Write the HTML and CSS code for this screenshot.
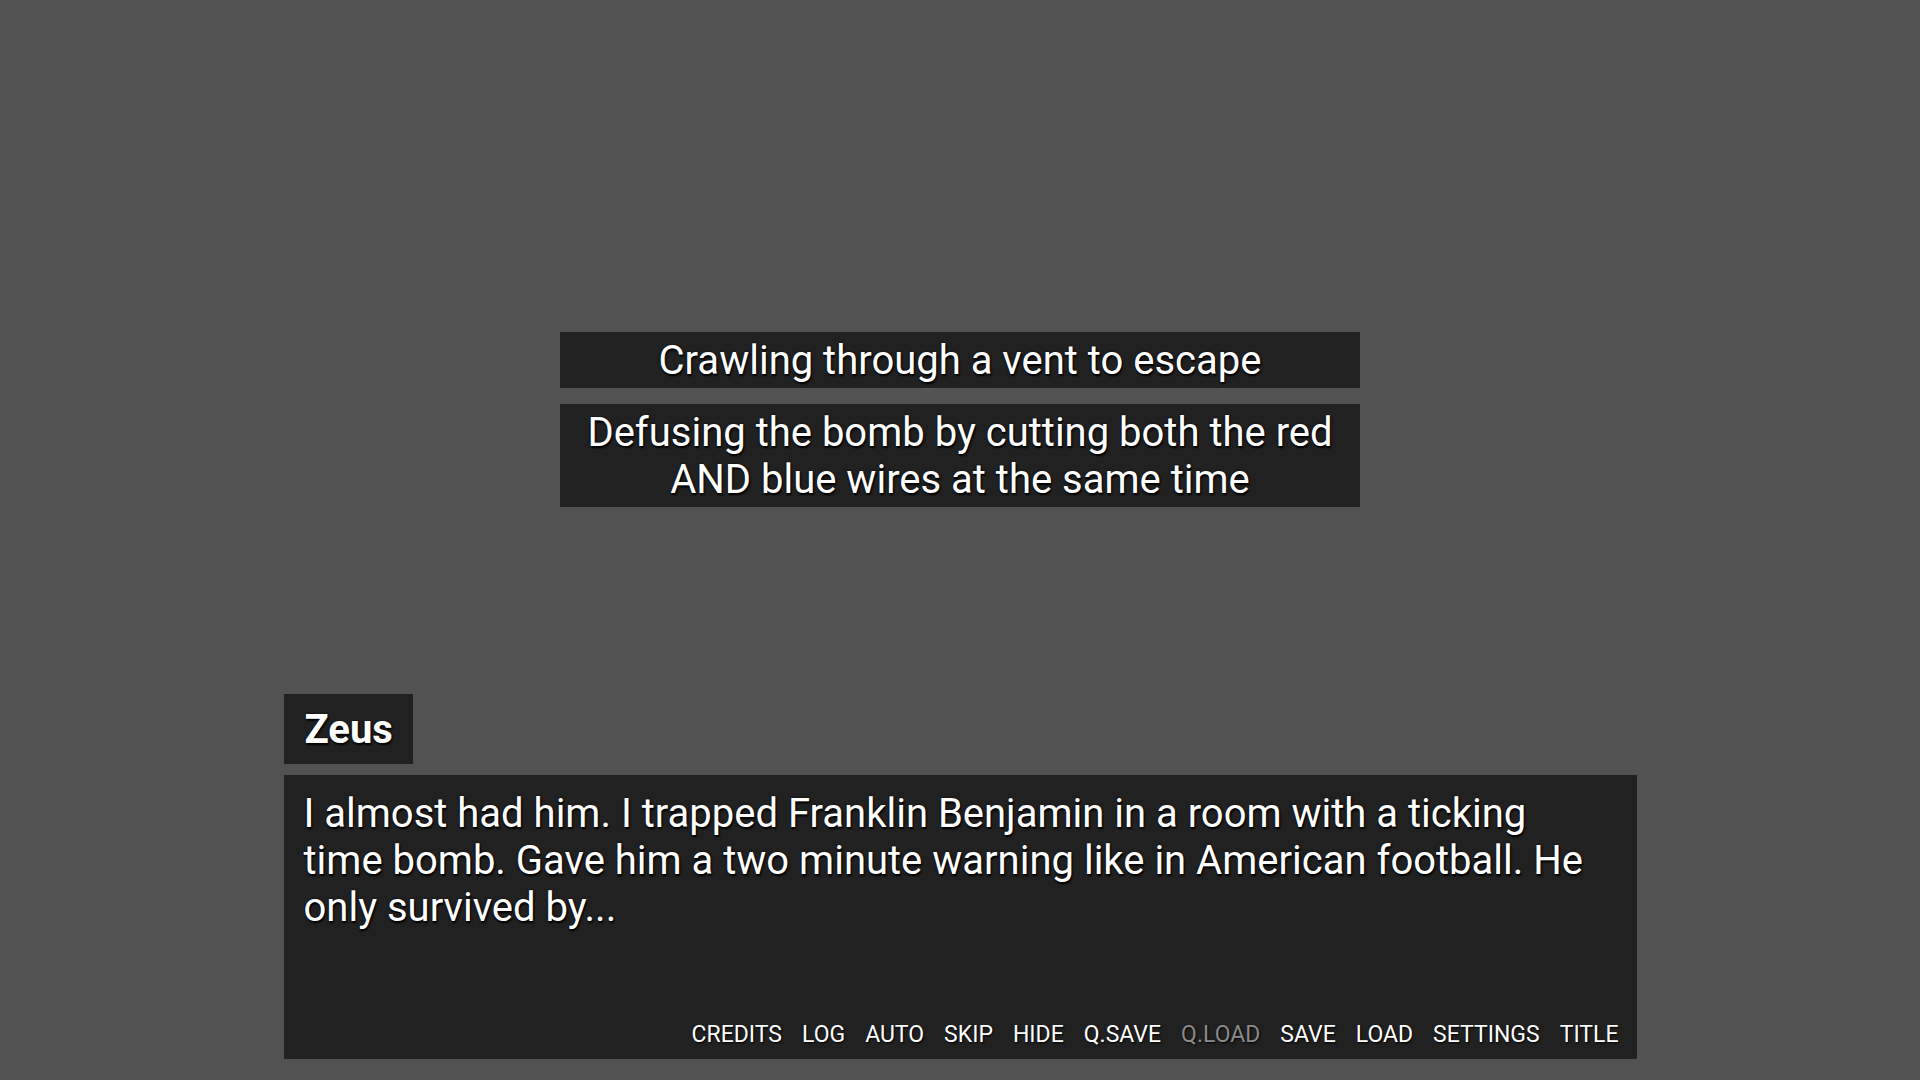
FILE: index.html
```html
<!DOCTYPE html>
<html lang="en">
<head>
<meta charset="utf-8">
<title>Scene</title>
<link rel="stylesheet" href="styles.css">
</head>
<body>
<div class="screen">
  <div class="choices">
    <div class="choice">Crawling through a vent to escape</div>
    <div class="choice">Defusing the bomb by cutting both the red AND blue wires at the same time</div>
  </div>
  <div class="say">
    <div class="namebox">Zeus</div>
    <div class="textbox">
      <p class="what">I almost had him. I trapped Franklin Benjamin in a room with a ticking time bomb. Gave him a two minute warning like in American football. He only survived by...</p>
      <nav class="quick">
        <span class="qbtn">CREDITS</span>
        <span class="qbtn">LOG</span>
        <span class="qbtn">AUTO</span>
        <span class="qbtn">SKIP</span>
        <span class="qbtn">HIDE</span>
        <span class="qbtn">Q.SAVE</span>
        <span class="qbtn disabled">Q.LOAD</span>
        <span class="qbtn">SAVE</span>
        <span class="qbtn">LOAD</span>
        <span class="qbtn">SETTINGS</span>
        <span class="qbtn">TITLE</span>
      </nav>
    </div>
  </div>
</div>
</body>
</html>
```

FILE: styles.css
```css
html, body {
  margin: 0;
  padding: 0;
}
body {
  background: #525252;
  font-family: Roboto, "Liberation Sans", sans-serif;
  color: #ffffff;
}
.screen {
  width: 1920px;
  height: 1080px;
  display: flex;
  flex-direction: column;
  align-items: center;
  box-sizing: border-box;
  padding-top: 332px;
  padding-bottom: 21px;
}
.choices {
  width: 800px;
  display: flex;
  flex-direction: column;
  gap: 16px;
}
.choice {
  background: #212121;
  text-align: center;
  font-size: 40px;
  line-height: 47px;
  padding: 4.5px 20px;
  text-shadow: 1px 2px 2px #000, 0 0 2px #000;
}
.say {
  margin-top: auto;
  width: 1353px;
  display: flex;
  flex-direction: column;
  align-items: flex-start;
  gap: 11px;
}
.namebox {
  background: #212121;
  font-size: 40px;
  font-weight: 700;
  line-height: 47px;
  padding: 12px 20px 11px 21px;
  text-shadow: 1px 2px 2px #000, 0 0 2px #000;
}
.textbox {
  align-self: stretch;
  height: 284px;
  box-sizing: border-box;
  background: #212121;
  display: flex;
  flex-direction: column;
  padding: 15px 18px 10px 20px;
}
.what {
  margin: 0;
  padding-right: 12px;
  font-size: 40px;
  line-height: 47px;
  text-shadow: 1px 2px 2px #000, 0 0 2px #000;
}
.quick {
  margin-top: auto;
  align-self: flex-end;
  display: flex;
  gap: 20px;
  font-size: 23px;
  line-height: 28px;
}
.qbtn {
  color: #ffffff;
  text-shadow: 1px 1px 2px #000;
}
.qbtn.disabled {
  color: #8a8a8a;
}
```
